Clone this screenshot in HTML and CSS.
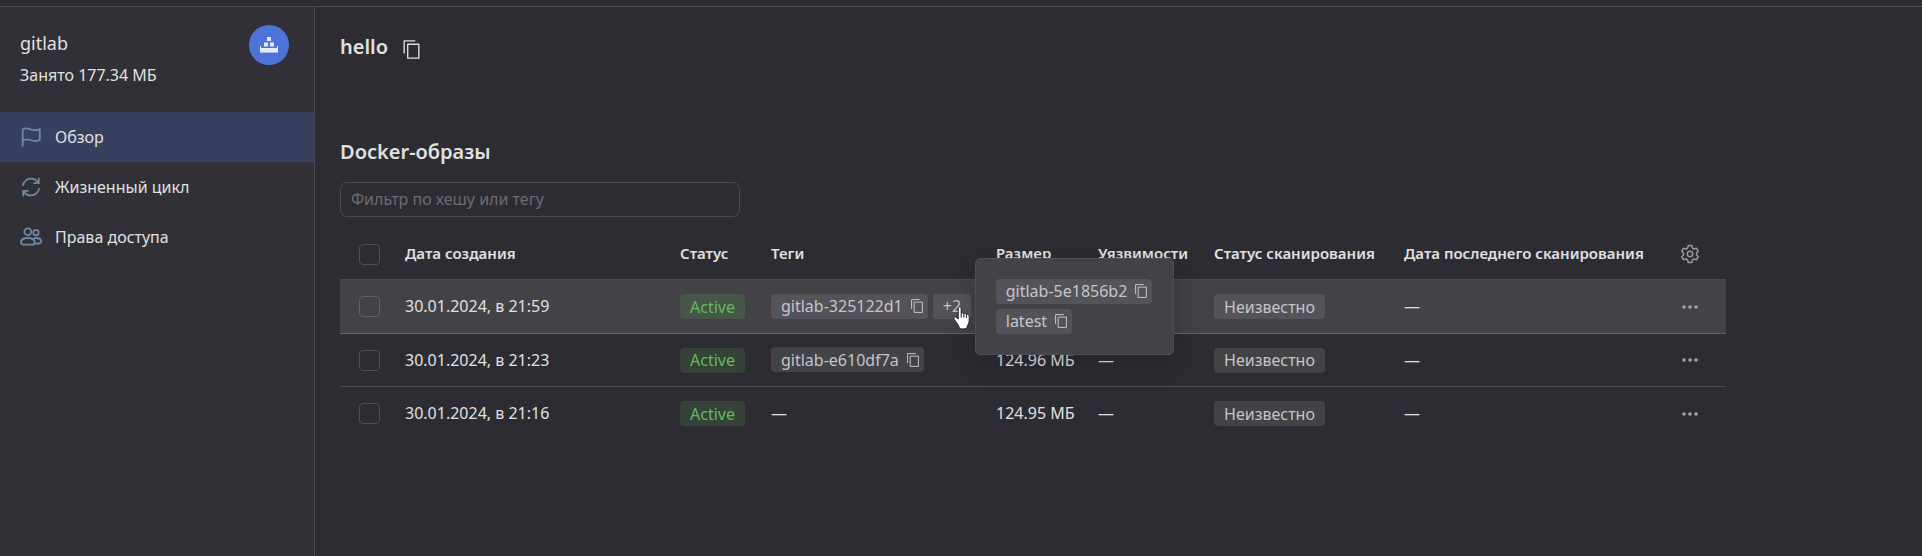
FILE: index.html
```html
<!DOCTYPE html>
<html lang="ru">
<head>
<meta charset="utf-8">
<title>hello — gitlab</title>
<link rel="stylesheet" href="styles.css">
</head>
<body>
<svg class="sprite" aria-hidden="true">
  <symbol id="copy" viewBox="0 0 12 14"><path d="M.6 10V.6h8.200" /><path d="M3.200 3.100h8.200v10.300H3.200z" /></symbol>
  <symbol id="dots" viewBox="0 0 18 6"><circle cx="3" cy="3" r="1.8"/><circle cx="9" cy="3" r="1.8"/><circle cx="15" cy="3" r="1.8"/></symbol>
</svg>
<div class="app">
  <aside class="sidebar">
    <header class="registry">
      <div class="registry-info">
        <div class="registry-name">gitlab</div>
        <div class="registry-usage">Занято 177.34 МБ</div>
      </div>
      <div class="registry-logo">
        <svg width="18" height="16" viewBox="0 0 18 16"><path fill="#e6ebfb" d="M7 0h4v4H7zM4 5.500h4v4H4zM10 5.500h4v4h-4z"/><path fill="#e6ebfb" d="M0 9h1v2h16V9h1v6H0z"/><path fill="#a9bbee" d="M0 15h18v1H0z"/></svg>
      </div>
    </header>
    <nav class="menu">
      <a class="menu-item active" href="#overview"><svg class="menu-icon" viewBox="0 0 22 22"><path d="M2.700 20.500V3.500C5 1.700 7.500 2.200 10.500 3.300s6 1.500 9.300-.2v10.800c-3.300 1.600-6.300 1.300-9.300.1s-5.500-.8-7.800.7"/></svg>Обзор</a>
      <a class="menu-item" href="#lifecycle"><svg class="menu-icon" viewBox="0 0 22 22"><path d="M2.800 9.800C3.500 5.500 7 2.600 11 2.600c3 0 5.600 1.500 7.200 4M19.200 12.200c-.7 4.300-4.200 7.200-8.200 7.200-3 0-5.600-1.500-7.200-4M18.800 1.800v5.400h-5.400M3.200 20.200v-5.400h5.400"/></svg>Жизненный цикл</a>
      <a class="menu-item" href="#access"><svg class="menu-icon" viewBox="0 0 22 22"><circle cx="7.800" cy="5.800" r="3.400"/><circle cx="16" cy="6.600" r="2.700"/><path d="M1 16.500c0-3 2.700-4.500 6.800-4.500s6.800 1.500 6.800 4.500c0 1.500-1 2.200-2.300 2.200h-9C2 18.700 1 18 1 16.500zM14 12.300c.6-.2 1.300-.3 2.200-.3 3 0 5 1.300 5 3.700 0 1.200-.8 1.800-1.900 1.800h-4.500"/></svg>Права доступа</a>
    </nav>
  </aside>
  <main class="content">
    <div class="title-row">
      <h1>hello</h1>
      <button class="icon-button" type="button" aria-label="Скопировать"><svg class="copy-large"><use href="#copy"/></svg></button>
    </div>
    <h2>Docker-образы</h2>
    <input class="filter" type="text" placeholder="Фильтр по хешу или тегу" aria-label="Фильтр по хешу или тегу">
    <table class="images">
      <colgroup><col class="c-check"><col class="c-date"><col class="c-status"><col class="c-tags"><col class="c-size"><col class="c-vuln"><col class="c-scan"><col class="c-last"><col class="c-menu"></colgroup>
      <thead>
        <tr>
          <th class="check"><input type="checkbox" aria-label="Выбрать все"></th>
          <th>Дата создания</th><th>Статус</th><th>Теги</th><th>Размер</th><th>Уязвимости</th><th>Статус сканирования</th><th>Дата последнего сканирования</th>
          <th class="menu-cell"><button class="icon-button" type="button" aria-label="Настройки"><svg class="gear" viewBox="0 0 20 20"><circle cx="10" cy="10" r="2.700"/><path d="M8.300 1.500h3.400l.7 2.500 1.700 1 2.500-.7 1.700 3-1.800 1.700v2l1.800 1.700-1.700 3-2.500-.7-1.700 1-.7 2.500H8.300L7.600 16l-1.700-1-2.500.7-1.700-3L3.500 11V9L1.700 7.300l1.700-3 2.500.7 1.700-1z"/></svg></button></th>
        </tr>
      </thead>
      <tbody>
        <tr class="hovered">
          <td class="check"><input type="checkbox" aria-label="Выбрать 21:59"></td>
          <td>30.01.2024, в 21:59</td>
          <td><span class="tag success">Active</span></td>
          <td>
            <div class="tags">
              <span class="tag copyable">gitlab-325122d1<button class="icon-button" type="button" aria-label="Скопировать"><svg class="copy"><use href="#copy"/></svg></button></span>
              <div class="more">
                <button class="tag" type="button">+2</button>
                <div class="popover">
                  <span class="tag copyable">gitlab-5e1856b2<button class="icon-button" type="button" aria-label="Скопировать"><svg class="copy"><use href="#copy"/></svg></button></span>
                  <span class="tag copyable">latest<button class="icon-button" type="button" aria-label="Скопировать"><svg class="copy"><use href="#copy"/></svg></button></span>
                </div>
                <svg class="pointer" viewBox="0 0 18 25"><path fill="#fff" stroke="#17171c" d="M5.200 2.200c0-2.100 3-2.100 3 0v5.300c.6-1 2.400-.8 2.700.5.700-.9 2.300-.5 2.500.6 1-.7 2.800 0 2.800 1.500v4.800c0 1.500-.5 2.600-1.200 3.800-.7 1.300-.8 1.800-.8 2.600 0 1-2 1.700-4.300 1.700-2 0-3.500-.6-3.700-1.500C5.800 19 3.600 17.200 2 14.600c-.8-1.500-1.700-2.700-1-3.400.9-1 2.500-.2 4.200 1.900z"/><path fill="none" stroke="#17171c" d="M8.200 7.500v4M10.900 8.200v3.500M13.400 9v3"/></svg>
              </div>
            </div>
          </td>
          <td>124.96 МБ</td><td>—</td>
          <td><span class="tag">Неизвестно</span></td><td>—</td>
          <td class="menu-cell"><button class="icon-button" type="button" aria-label="Действия"><svg class="dots"><use href="#dots"/></svg></button></td>
        </tr>
        <tr>
          <td class="check"><input type="checkbox" aria-label="Выбрать 21:23"></td>
          <td>30.01.2024, в 21:23</td>
          <td><span class="tag success">Active</span></td>
          <td><div class="tags"><span class="tag copyable">gitlab-e610df7a<button class="icon-button" type="button" aria-label="Скопировать"><svg class="copy"><use href="#copy"/></svg></button></span></div></td>
          <td>124.96 МБ</td><td>—</td>
          <td><span class="tag">Неизвестно</span></td><td>—</td>
          <td class="menu-cell"><button class="icon-button" type="button" aria-label="Действия"><svg class="dots"><use href="#dots"/></svg></button></td>
        </tr>
        <tr>
          <td class="check"><input type="checkbox" aria-label="Выбрать 21:16"></td>
          <td>30.01.2024, в 21:16</td>
          <td><span class="tag success">Active</span></td>
          <td>—</td>
          <td>124.95 МБ</td><td>—</td>
          <td><span class="tag">Неизвестно</span></td><td>—</td>
          <td class="menu-cell"><button class="icon-button" type="button" aria-label="Действия"><svg class="dots"><use href="#dots"/></svg></button></td>
        </tr>
      </tbody>
    </table>
  </main>
</div>
</body>
</html>
```
FILE: styles.css
```css
* { box-sizing: border-box; }
body {
  margin: 0;
  padding-top: 6px;
  min-height: 100vh;
  display: flex;
  background: #2d2c33;
  color: #e0e0e1;
  font: 16px/24px "Noto Sans", "Open Sans", sans-serif;
}
.sprite { position: absolute; width: 0; height: 0; }
svg { display: block; fill: none; stroke-linejoin: round; }
button { font: inherit; color: inherit; border: 0; cursor: pointer; }
.app { flex: 1; display: flex; border-top: 1px solid #4b4a50; }
.sidebar { width: 315px; flex: none; background: #313036; border-right: 1px solid #4b4a50; }
.registry { display: flex; justify-content: space-between; padding: 18px 25px 25px 20px; }
.registry-info { padding-top: 5px; }
.registry-name { font-size: 18px; line-height: 26px; }
.registry-usage { margin-top: 7px; }
.registry-logo {
  width: 40px; height: 40px; border-radius: 50%; background: #4d73d8;
  display: flex; align-items: center; justify-content: center;
}
.menu-item {
  display: flex; align-items: center; gap: 13px; height: 50px; padding: 0 20px;
  color: inherit; text-decoration: none;
}
.menu-item.active { background: #38405f; }
.menu-icon { width: 22px; height: 22px; stroke: #6c89a2; stroke-width: 1.8; }
.content { flex: 1; min-width: 0; padding: 26px 25px 25px; }
.title-row { display: flex; align-items: center; gap: 15px; }
.title-row .icon-button { margin-top: 4px; }
h1, h2 { margin: 0; font-size: 20px; line-height: 28px; font-weight: 600; }
h2 { margin-top: 77px; }
.icon-button { padding: 0; background: none; display: block; }
.copy-large { width: 17px; height: 19px; stroke: #e0e0e1; }
.filter {
  display: block; width: 400px; height: 35px; margin-top: 16px; padding: 0 10px 2px;
  border: 1px solid #4b4a50; border-radius: 7px; background: transparent;
  color: inherit; font: inherit;
}
.filter::placeholder { color: #6c6b70; opacity: 1; }
.images { width: 1386px; max-width: 100%; margin-top: 12px; table-layout: fixed; border-spacing: 0; }
.c-check { width: 53px; }
.c-date { width: 275px; }
.c-status { width: 91px; }
.c-tags { width: 225px; }
.c-size { width: 102px; }
.c-vuln { width: 116px; }
.c-scan { width: 190px; }
.c-last { width: 262px; }
.c-menu { width: 72px; }
th, td {
  height: 53px; padding: 0 12px; border-bottom: 1px solid #4b4a50;
  text-align: left; vertical-align: middle; white-space: nowrap;
}
th { height: 51px; padding-bottom: 2px; font-size: 15px; font-weight: 600; }
tbody tr:last-child td { border-bottom: 0; }
.hovered td { height: 54px; background: #434247; border-bottom-color: #626166; }
td { padding-bottom: 1px; }
.check { padding: 0 0 0 19px; }
.check input {
  appearance: none; display: block; width: 21px; height: 21px; margin: 0;
  border: 1px solid #4f4e54; border-radius: 4px;
}
.hovered .check input { border-color: #626166; }
.tags { display: flex; gap: 5px; }
.tag {
  display: inline-flex; align-items: center; gap: 8px; height: 25px; padding: 0 10px;
  border-radius: 4px; background: #434247; color: #c5c5c8; vertical-align: middle;
}
.tag.copyable { padding-right: 5px; }
.tag.success { background: #354237; color: #63ba5d; }
.hovered .tag { background: #545359; }
.hovered .tag.success { background: #475649; }
.copy { width: 12px; height: 14px; stroke: #c5c5c8; }
.more { position: relative; display: flex; }
.popover {
  position: absolute; z-index: 1; left: 42px; top: -36px;
  width: 199px; padding: 20px; border: 1px solid #4f4e54; border-radius: 5px;
  background: #434247; box-shadow: 0 10px 25px rgba(0, 0, 0, .2);
  display: flex; flex-direction: column; align-items: flex-start; gap: 5px;
}
.pointer { position: absolute; z-index: 2; left: 20px; top: 12px; width: 18px; height: 25px; }
.menu-cell { padding: 0; }
.menu-cell .icon-button { margin: 0 auto; }
.gear { width: 20px; height: 20px; stroke: #99989c; stroke-width: 1.5; }
.dots { width: 18px; height: 6px; fill: #a5a4a8; }
```
